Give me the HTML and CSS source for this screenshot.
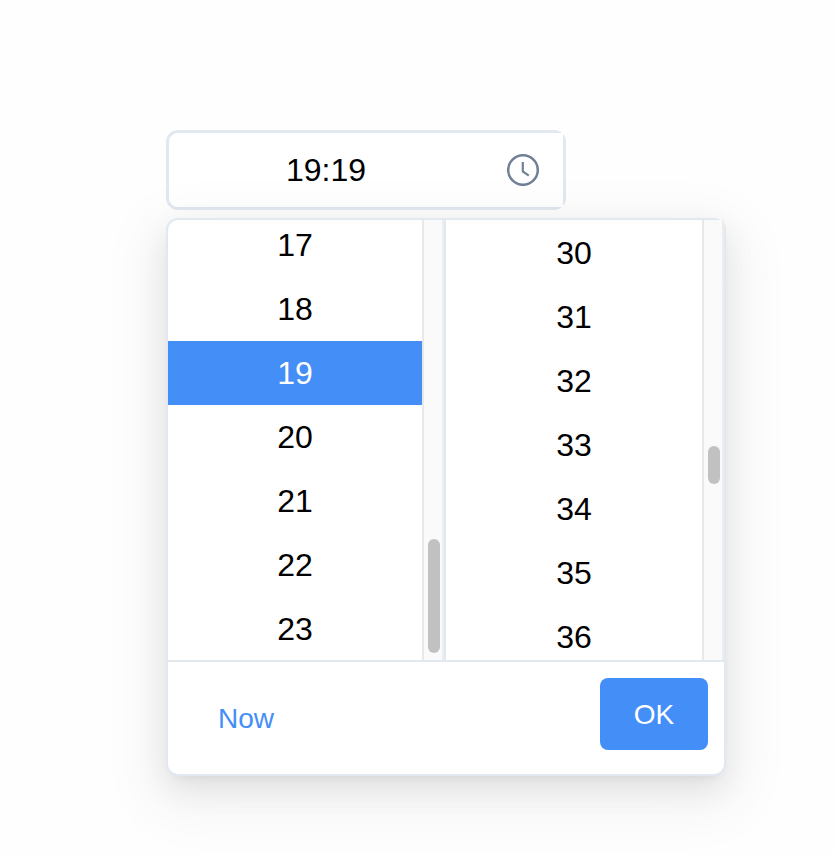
FILE: index.html
```html
<!DOCTYPE html>
<html lang="en">
<head>
<meta charset="utf-8">
<title>Time picker</title>
<link rel="stylesheet" href="styles.css">
</head>
<body>
<main class="picker">
  <div class="field">
    <div class="field-inner">
      <span class="field-value">19:19</span>
      <svg class="clock" viewBox="0 0 32 32" fill="none" stroke="currentColor" stroke-width="2.5">
        <circle cx="16" cy="16" r="14.8"/>
        <path d="M15.8 8v9.4l6 4.2" stroke-width="2.2"/>
      </svg>
    </div>
  </div>
  <div class="panel">
    <div class="columns">
      <div class="column hours">
        <ul class="list">
          <li>17</li><li>18</li><li class="selected">19</li><li>20</li><li>21</li><li>22</li><li>23</li>
        </ul>
        <div class="track"><div class="thumb"></div></div>
      </div>
      <div class="column minutes">
        <ul class="list">
          <li>30</li><li>31</li><li>32</li><li>33</li><li>34</li><li>35</li><li>36</li>
        </ul>
        <div class="track"><div class="thumb"></div></div>
      </div>
    </div>
    <div class="footer">
      <a class="now">Now</a>
      <button class="ok" type="button">OK</button>
    </div>
  </div>
</main>
</body>
</html>
```
FILE: styles.css
```css
* { box-sizing: border-box; }
html { background: #fefefe; }
body {
  margin: 0;
  min-height: 100vh;
  color: #000;
  font-family: "Liberation Sans", Arial, sans-serif;
  font-size: 32px;
}
.picker { padding: 130px 0 0 166px; }
.field {
  width: 400px;
  height: 80px;
  border: 3px solid #e2e8f0;
  border-radius: 12px;
  background: #fff;
}
.field-inner {
  display: flex;
  align-items: center;
  height: 74px;
  padding-right: 24px;
  border-radius: 9px 0 0 9px;
  background: #fff;
}
.field-value { width: 314px; text-align: center; }
.clock { width: 32px; height: 32px; margin-left: auto; color: #718096; }
.panel {
  position: relative;
  width: 560px;
  height: 558px;
  margin-top: 8px;
  border: 2px solid #e2e8f0;
  border-radius: 12px;
  background: #fff;
  box-shadow:
    0 12px 32px rgba(0, 0, 0, 0.08),
    0 6px 12px -8px rgba(0, 0, 0, 0.12),
    0 18px 56px 16px rgba(0, 0, 0, 0.05);
}
.columns { display: flex; height: 440px; }
.column { display: flex; height: 440px; overflow: hidden; }
.hours { width: 276px; }
.minutes { width: 280px; border-left: 2px solid #e2e8f0; }
.list { flex: 1; margin: 1px 0 0; padding: 0; list-style: none; }
.hours .list { margin-top: -7px; }
.list li { height: 64px; line-height: 65px; text-align: center; }
.list .selected { background: #448ef7; color: #fff; }
.track {
  width: 22px;
  padding: 0 4px;
  border-left: 2px solid #e8e8e8;
  border-right: 2px solid #ededed;
  background: #fafafa;
}
.thumb { width: 12px; border-radius: 6px; background: #c1c1c1; }
.hours .thumb { height: 114px; margin-top: 319px; }
.minutes .thumb { height: 38px; margin-top: 226px; }
.footer {
  display: flex;
  align-items: flex-start;
  justify-content: space-between;
  height: 114px;
  padding: 16px 16px 0 50px;
  border-top: 2px solid #e2e8f0;
  font-size: 28px;
}
.now { line-height: 82px; color: #448ef7; }
.ok {
  width: 108px;
  height: 72px;
  padding: 2px 0 0;
  border: 0;
  border-radius: 8px;
  background: #448ef7;
  color: #fff;
  font: inherit;
}
```
